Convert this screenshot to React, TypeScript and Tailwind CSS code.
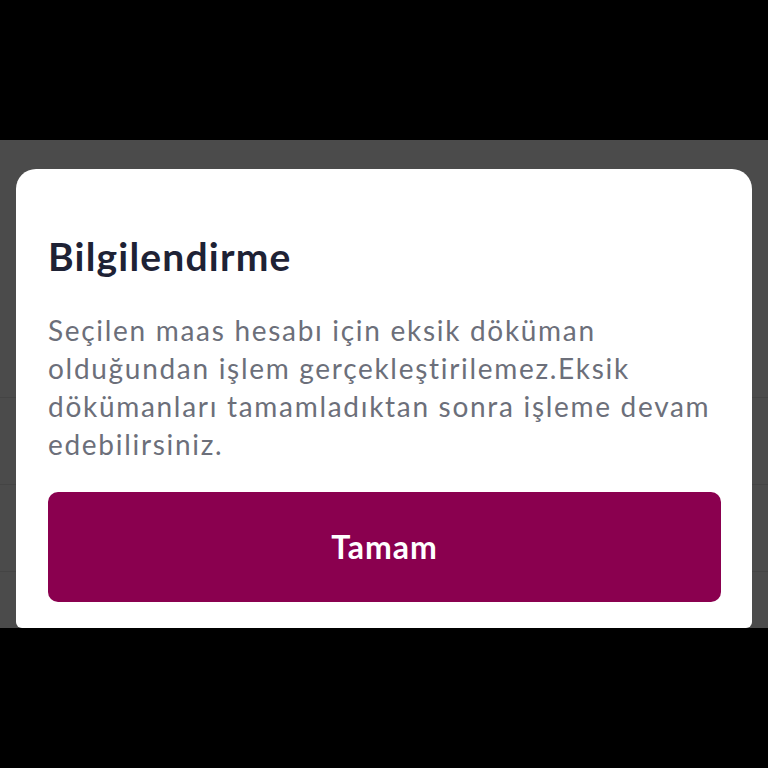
import React from "react";

const font = { fontFamily: "Lato, 'Noto Sans', sans-serif" };

export default function App() {
  return (
    <div className="w-[768px] h-[768px] bg-black flex flex-col overflow-hidden" style={font}>
      <div className="h-[140px] shrink-0 bg-black" />
      <div className="relative h-[488px] shrink-0 bg-[#4b4b4b] flex flex-col pt-[29px] px-4">
        {/* dimmed list rows behind the dialog */}
        <div className="absolute inset-0 flex flex-col pt-[171px]">
          <div className="h-[87px] border-b border-[#444444]" />
          <div className="h-[87px] border-b border-[#444444]" />
          <div className="h-[87px] border-b border-[#444444]" />
        </div>
        <div className="relative flex-1 bg-white rounded-t-[20px] rounded-b-[6px] pl-8 pr-[31px] flex flex-col">
          <h2 className="mt-[64px] text-[39px] leading-[46px] font-bold tracking-[1.2px] text-[#1e2235]">
            Bilgilendirme
          </h2>
          <p className="mt-[32px] text-[28px] leading-[38px] tracking-[1.7px] text-[#6c6f7a] whitespace-nowrap">
            Seçilen maas hesabı için eksik döküman
            <br />
            olduğundan işlem gerçekleştirilemez.Eksik
            <br />
            dökümanları tamamladıktan sonra işleme devam
            <br />
            edebilirsiniz.
          </p>
          <button className="mt-[29px] h-[110px] w-full rounded-[10px] bg-[#8a004f] text-white text-[32px] font-bold tracking-[1px]">
            Tamam
          </button>
        </div>
      </div>
      <div className="flex-1 bg-black" />
    </div>
  );
}
